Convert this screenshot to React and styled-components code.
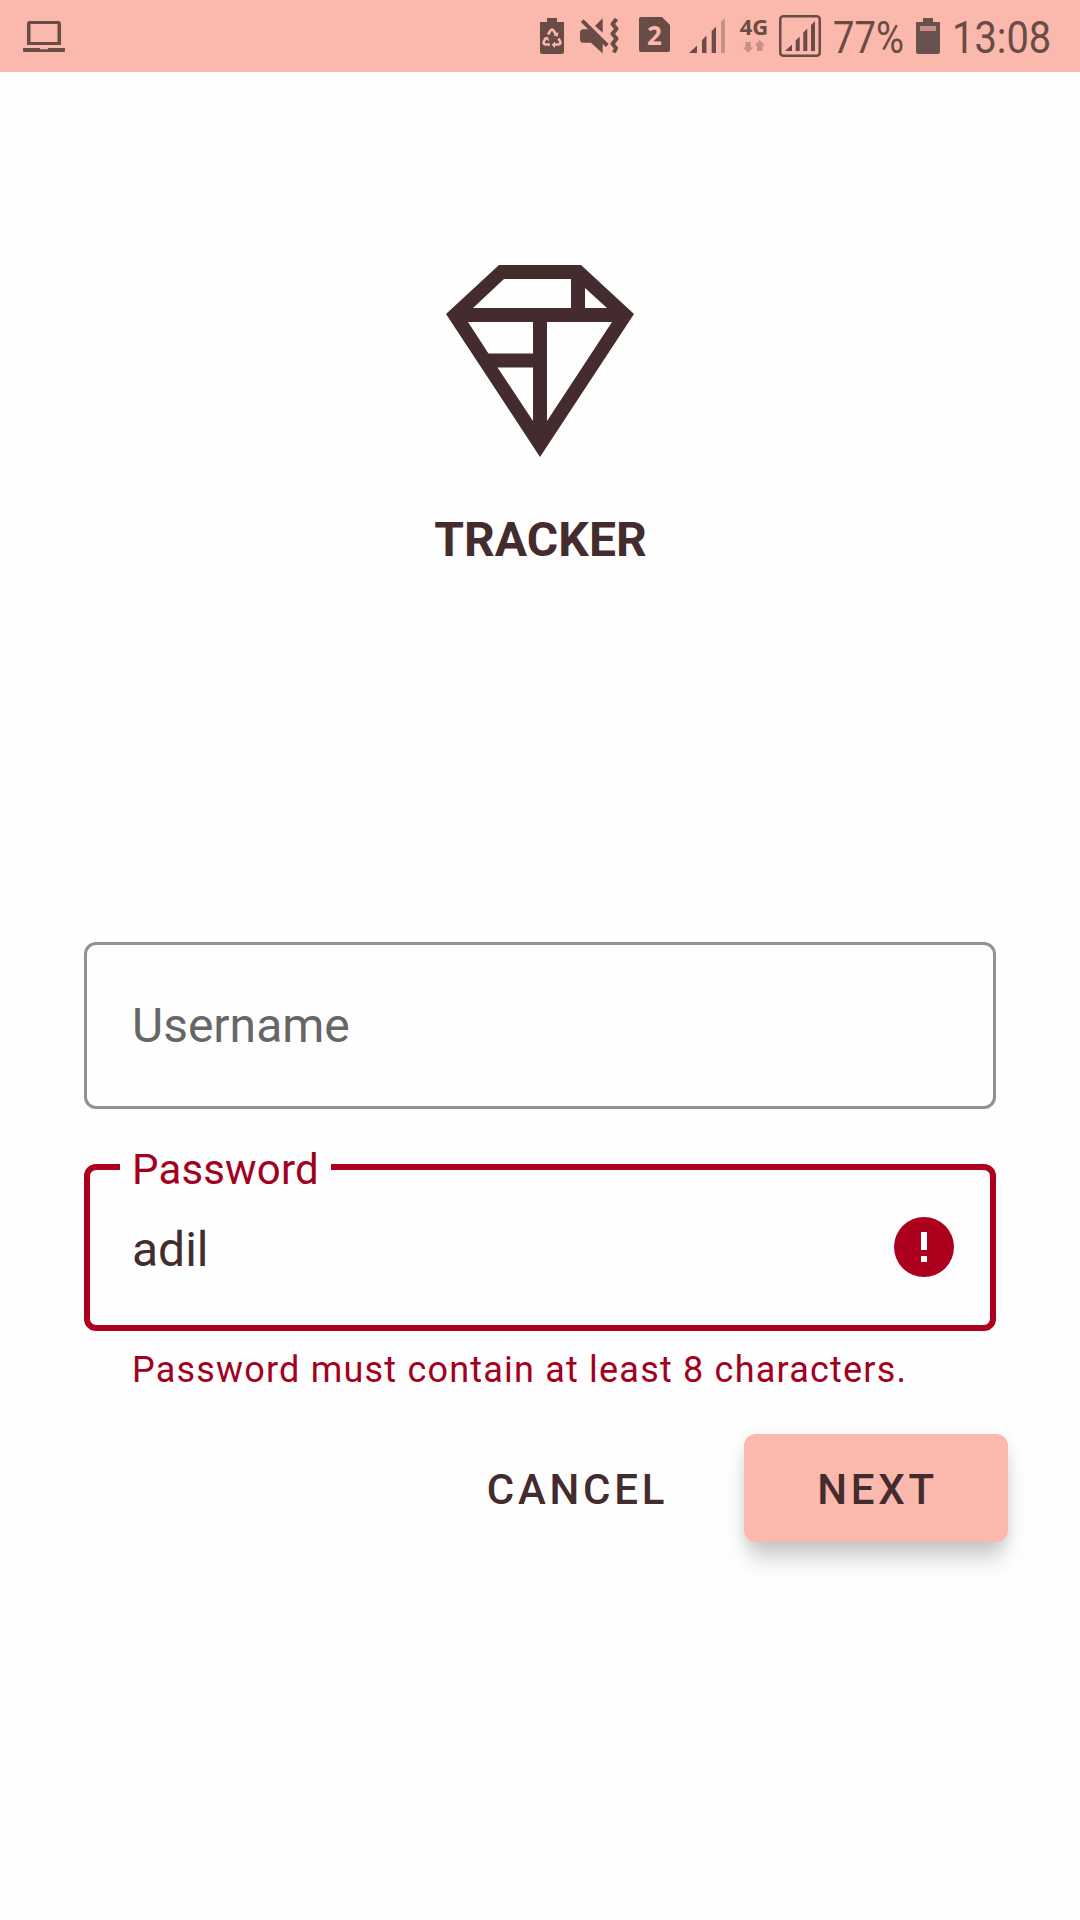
import React from "react";
import styled, { createGlobalStyle } from "styled-components";

const ink = "#442c2e";
const danger = "#ad001f";
const dangerText = "#a30020";
const status = "#694c46";

const Global = createGlobalStyle`
  * { box-sizing: border-box; }
  html, body { margin: 0; padding: 0; background: #fefefe; }
  body { font-family: Roboto, "Liberation Sans", sans-serif; }
`;

const Screen = styled.div`
  width: 1080px;
  height: 1920px;
  overflow: hidden;
  background: #fefefe;
  color: ${ink};
  display: flex;
  flex-direction: column;
`;

const StatusBar = styled.header`
  height: 72px;
  flex: none;
  background: #fbb8ac;
  color: ${status};
  display: flex;
  align-items: center;
  padding: 0 29px 0 23px;
`;

const Glyph = styled.svg`
  display: block;
  flex: none;
  width: ${(p) => p.$w}px;
  height: ${(p) => p.$h}px;
  margin-left: ${(p) => p.$gap || 0}px;
`;

const Spacer = styled.div`
  flex: 1;
`;

const StatusText = styled.span`
  flex: none;
  width: ${(p) => p.$w}px;
  margin-left: ${(p) => p.$gap}px;
  font-size: 45px;
  line-height: 72px;
  white-space: nowrap;
  padding-top: 3px;
  span {
    display: inline-block;
    transform: scaleX(${(p) => p.$squeeze});
    transform-origin: 0 50%;
  }
`;

const Network = styled.div`
  flex: none;
  width: 30px;
  height: 36px;
  margin-left: 14px;
  display: flex;
  flex-direction: column;
  align-items: center;
  justify-content: space-between;
  font: 700 22px/16px "Open Sans", sans-serif;
`;

const Brand = styled.div`
  padding-top: 193px;
  display: flex;
  flex-direction: column;
  align-items: center;
`;

const BrandName = styled.h1`
  margin: 55px 0 0;
  padding-left: 1px;
  font-size: 48px;
  line-height: 56px;
  font-weight: 700;
  letter-spacing: 0.1px;
`;

const Form = styled.form`
  margin-top: 374px;
  padding: 0 84px;
  display: flex;
  flex-direction: column;
`;

const Field = styled.fieldset`
  margin: ${(p) => (p.$error ? 33 : 0)}px 0 0;
  min-width: 0;
  height: ${(p) => (p.$error ? 189 : 167)}px;
  border: ${(p) => (p.$error ? `6px solid ${danger}` : "3px solid #929292")};
  border-radius: 12px;
  padding: 0 ${(p) => (p.$error ? 36 : 45)}px 0 ${(p) => (p.$error ? 42 : 45)}px;
  font-size: 48px;
  color: ${(p) => (p.$error ? ink : "#666")};
`;

const Legend = styled.legend`
  margin-left: -12px;
  padding: 6px 12px 0;
  font-size: 42px;
  line-height: 44px;
  letter-spacing: 0.15px;
  color: ${dangerText};
`;

const FieldRow = styled.div`
  height: ${(p) => p.$h}px;
  display: flex;
  align-items: center;
  justify-content: space-between;
`;

const Value = styled.span`
  line-height: 56px;
  padding-top: ${(p) => p.$drop || 0}px;
`;

const Helper = styled.p`
  margin: 18px 0 0 48px;
  font-size: 36px;
  line-height: 42px;
  letter-spacing: 1.2px;
  color: ${dangerText};
  white-space: nowrap;
`;

const Actions = styled.div`
  display: flex;
  justify-content: flex-end;
  gap: 52px;
  margin: 43px -12px 0 0;
`;

const Button = styled.button`
  height: 108px;
  width: ${(p) => p.$w}px;
  padding: 3px 0 0 3px;
  border: 0;
  border-radius: 12px;
  font: 500 42px/50px Roboto, sans-serif;
  letter-spacing: 3.75px;
  color: ${ink};
  background: ${(p) => (p.$raised ? "#fbb8ac" : "transparent")};
  box-shadow: ${(p) =>
    p.$raised ? "0 22px 22px -5px rgba(0,0,0,.17), 0 4px 16px rgba(0,0,0,.1)" : "none"};
`;

export default function App() {
  return (
    <Screen>
      <Global />
      <StatusBar>
        <Glyph $w={42} $h={32} viewBox="0 0 42 32">
          <path fill="currentColor" fillRule="evenodd" d="M7 1h28a3 3 0 0 1 3 3v21H4V4a3 3 0 0 1 3-3zm0.500 3v18h27V4zM0 28h17v1.200h8V28h17v3.500l-1 .5H1l-1-.5z" />
        </Glyph>
        <Spacer />
        <Glyph $w={24} $h={36} viewBox="0 0 24 36">
          <path fill="currentColor" d="M7 0h10v4h7v30a2 2 0 0 1-2 2H2a2 2 0 0 1-2-2V4h7z" />
          <path d="M8 16.500l2.500-4q1.500-2 3 0l2.500 4M18.500 20.500l1.500 2.500q1.300 3.300-2 3.500h-4M10 26.500H6q-3.300-.2-2-3.500l1.500-2.500" fill="none" stroke="#fbb8ac" strokeWidth="2.600" />
          <path fill="#fbb8ac" d="M13.200 17.500l4.500 1 .8-4.500zM15 23.500v6.500l-3.300-3.300zM3.500 19.800l4.500-1 1.200 4.500z" />
        </Glyph>
        <Glyph $w={39} $h={36} $gap={16} viewBox="0 0 39 36">
          <path fill="currentColor" d="M0 13.500l2-2.200h7L22.700 25v10.500L11 24.700H2l-2-2zM22.700.3v14.400L15 8z" />
          <path d="M2.200 2.700l25 24.800" stroke="currentColor" strokeWidth="4" />
          <path d="M36.500 1l-4 5 4 4.700-4 5 4 5.100-4 5 3.500 4.200-2 4.500" fill="none" stroke="currentColor" strokeWidth="4" strokeLinejoin="round" />
        </Glyph>
        <Glyph $w={31} $h={38} $gap={20} viewBox="0 0 31 38">
          <path fill="currentColor" d="M2 0h21l8 8v25a2 2 0 0 1-2 2H2a2 2 0 0 1-2-2V2a2 2 0 0 1 2-2z" />
          <text x="15.500" y="28" textAnchor="middle" fontFamily="Open Sans, sans-serif" fontWeight="700" fontSize="26" fill="#fbb8ac">2</text>
        </Glyph>
        <Glyph $w={36} $h={36} $gap={19} viewBox="0 0 36 36">
          <path fill="currentColor" d="M0 35l8-7.500V35zM13 22l4.500-4.500V35H13zM22.700 13L27 8.700V35h-4.300z" />
          <path fill="#c79086" d="M32 4l4-4v35h-4z" />
        </Glyph>
        <Network>
          4G
          <Glyph $w={22} $h={14} viewBox="0 0 22 14">
            <path fill="#c79086" d="M2.500 2h5.200v5.500h2.500L5.200 13 0 7.500h2.500zM14 11V5.500h-2.500L16.700 0 22 5.500h-2.500V11z" />
          </Glyph>
        </Network>
        <Glyph $w={42} $h={42} $gap={10} viewBox="0 0 42 42">
          <rect x="1.250" y="1.250" width="39.500" height="39.500" rx="3" fill="none" stroke="currentColor" strokeWidth="2.500" />
          <path fill="currentColor" d="M6 36l7-6.500V36zM16.700 25.500l4-4V36h-4zM24.300 17.500l4-4V36h-4zM32 10l4-4v30h-4z" />
        </Glyph>
        <StatusText $w={71} $gap={12} $squeeze={0.85}><span>77%</span></StatusText>
        <Glyph $w={24} $h={36} $gap={12} viewBox="0 0 24 36">
          <path fill="#69524e" d="M7 0h10v4h7v30a2 2 0 0 1-2 2H2a2 2 0 0 1-2-2V4h7z" />
          <path fill="#c79086" d="M4 8h16v5H4z" />
        </Glyph>
        <StatusText $w={99} $gap={12} $squeeze={0.885}><span>13:08</span></StatusText>
      </StatusBar>
      <Brand>
        <Glyph $w={188} $h={192} viewBox="0 0 188 192">
          <path fill={ink} fillRule="evenodd" d="M53 0h82l53 49L94 192 0 49zM58 14L27 43h98V14zM139 23v20h22zM22 57l20.500 31.500H87V57zM101 57v99l65-99zM51.500 102.500H87V156z" />
        </Glyph>
        <BrandName>TRACKER</BrandName>
      </Brand>
      <Form onSubmit={(e) => e.preventDefault()}>
        <Field>
          <FieldRow $h={161}>
            <Value>Username</Value>
          </FieldRow>
        </Field>
        <Field $error>
          <Legend>Password</Legend>
          <FieldRow $h={110}>
            <Value $drop={6}>adil</Value>
            <Glyph $w={60} $h={60} viewBox="0 0 60 60">
              <circle cx="30" cy="30" r="30" fill={danger} />
              <path fill="#fff" d="M27 15h6v18h-6zM27 39h6v6h-6z" />
            </Glyph>
          </FieldRow>
        </Field>
        <Helper>Password must contain at least 8 characters.</Helper>
        <Actions>
          <Button type="button" $w={232}>CANCEL</Button>
          <Button type="submit" $w={264} $raised>NEXT</Button>
        </Actions>
      </Form>
    </Screen>
  );
}
